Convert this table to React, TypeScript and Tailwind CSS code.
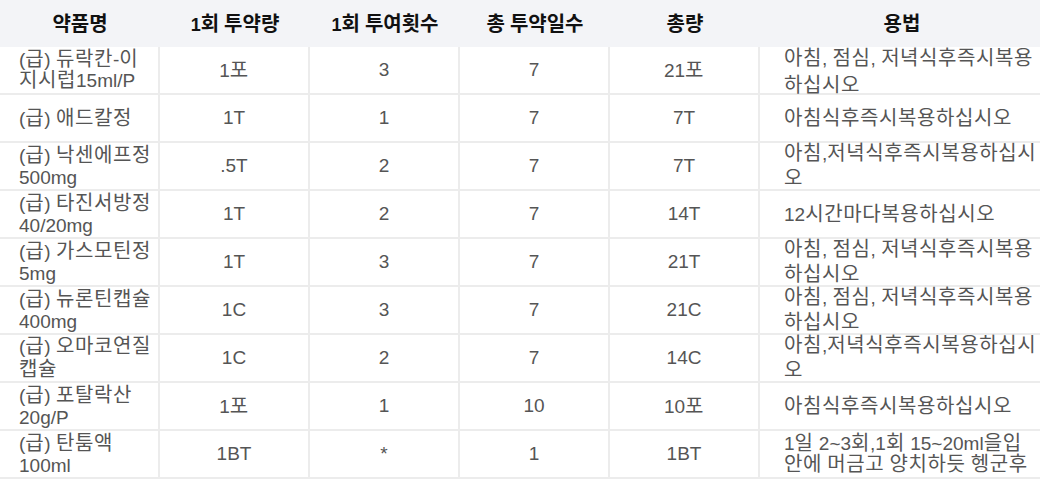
import type { ReactNode } from 'react'

interface Prescription {
  name: string
  dose: string
  times: string
  days: string
  total: string
  usage: string
  nameLeading?: string
  usageLeading?: string
}

const headers = ['약품명', '1회 투약량', '1회 투여횟수', '총 투약일수', '총량', '용법']

const prescriptions: Prescription[] = [
  {
    name: '(급) 듀락칸-이지시럽15ml/P',
    dose: '1포',
    times: '3',
    days: '7',
    total: '21포',
    usage: '아침, 점심, 저녁식후즉시복용하십시오',
    nameLeading: 'leading-[21px]',
    usageLeading: 'leading-[27px] pt-[4px]',
  },
  { name: '(급) 애드칼정', dose: '1T', times: '1', days: '7', total: '7T', usage: '아침식후즉시복용하십시오' },
  { name: '(급) 낙센에프정 500mg', dose: '.5T', times: '2', days: '7', total: '7T', usage: '아침,저녁식후즉시복용하십시오' },
  { name: '(급) 타진서방정 40/20mg', dose: '1T', times: '2', days: '7', total: '14T', usage: '12시간마다복용하십시오' },
  { name: '(급) 가스모틴정 5mg', dose: '1T', times: '3', days: '7', total: '21T', usage: '아침, 점심, 저녁식후즉시복용하십시오' },
  { name: '(급) 뉴론틴캡슐 400mg', dose: '1C', times: '3', days: '7', total: '21C', usage: '아침, 점심, 저녁식후즉시복용하십시오' },
  { name: '(급) 오마코연질캡슐', dose: '1C', times: '2', days: '7', total: '14C', usage: '아침,저녁식후즉시복용하십시오' },
  { name: '(급) 포탈락산 20g/P', dose: '1포', times: '1', days: '10', total: '10포', usage: '아침식후즉시복용하십시오' },
  {
    name: '(급) 탄툼액 100ml',
    dose: '1BT',
    times: '*',
    days: '1',
    total: '1BT',
    usage: '1일 2~3회,1회 15~20ml을입안에 머금고 양치하듯 헹군후',
    usageLeading: 'leading-[21px]',
  },
]

const gridCols = 'grid grid-cols-[160px_150px_150px_150px_150px_284px]'

// hangul runs get their own size so they keep the wider advance of the original font
function Mixed({ text, hangulClass }: { text: string; hangulClass: string }) {
  const parts = text.split(/([\uAC00-\uD7A3]+)/)
  return (
    <span>
      {parts.map((part, i) =>
        /[\uAC00-\uD7A3]/.test(part) ? (
          <span key={i} className={hangulClass}>
            {part}
          </span>
        ) : (
          part
        ),
      )}
    </span>
  )
}

function Cell({ children, className = '' }: { children: ReactNode; className?: string }) {
  return (
    <div className={`flex h-[46px] items-center border-r-2 border-[#ececec] ${className}`}>
      {children}
    </div>
  )
}

const bodyHangul = 'text-[20px] tracking-[0.6px]'

export default function App() {
  return (
    <div
      className="h-[481px] w-[1040px] overflow-hidden bg-white text-[19px] text-[#555555]"
      style={{ fontFamily: '"Liberation Sans", "Noto Sans CJK KR", sans-serif' }}
    >
      <div className="w-[1044px]">
        <div className={`${gridCols} relative z-10 h-[47px] bg-[#f3f4f7]`}>
          {headers.map((title) => (
            <div key={title} className="flex items-center justify-center text-[18px] font-bold text-[#111111]">
              <Mixed text={title} hangulClass="text-[20px]" />
            </div>
          ))}
        </div>

        {prescriptions.map((item) => (
          <div key={item.name} className={`${gridCols} border-b-2 border-[#ececec]`}>
            <Cell className={`pl-[19px] pr-[2px] ${item.nameLeading ?? 'leading-[22px]'}`}>
              <Mixed text={item.name} hangulClass={bodyHangul} />
            </Cell>
            <Cell className="justify-center">
              <Mixed text={item.dose} hangulClass={bodyHangul} />
            </Cell>
            <Cell className="justify-center">{item.times}</Cell>
            <Cell className="justify-center">{item.days}</Cell>
            <Cell className="justify-center">
              <Mixed text={item.total} hangulClass={bodyHangul} />
            </Cell>
            <div className={`flex h-[46px] items-center pl-[24px] pr-[5px] ${item.usageLeading ?? 'leading-[25px]'}`}>
              <Mixed text={item.usage} hangulClass={bodyHangul} />
            </div>
          </div>
        ))}
      </div>
    </div>
  )
}
